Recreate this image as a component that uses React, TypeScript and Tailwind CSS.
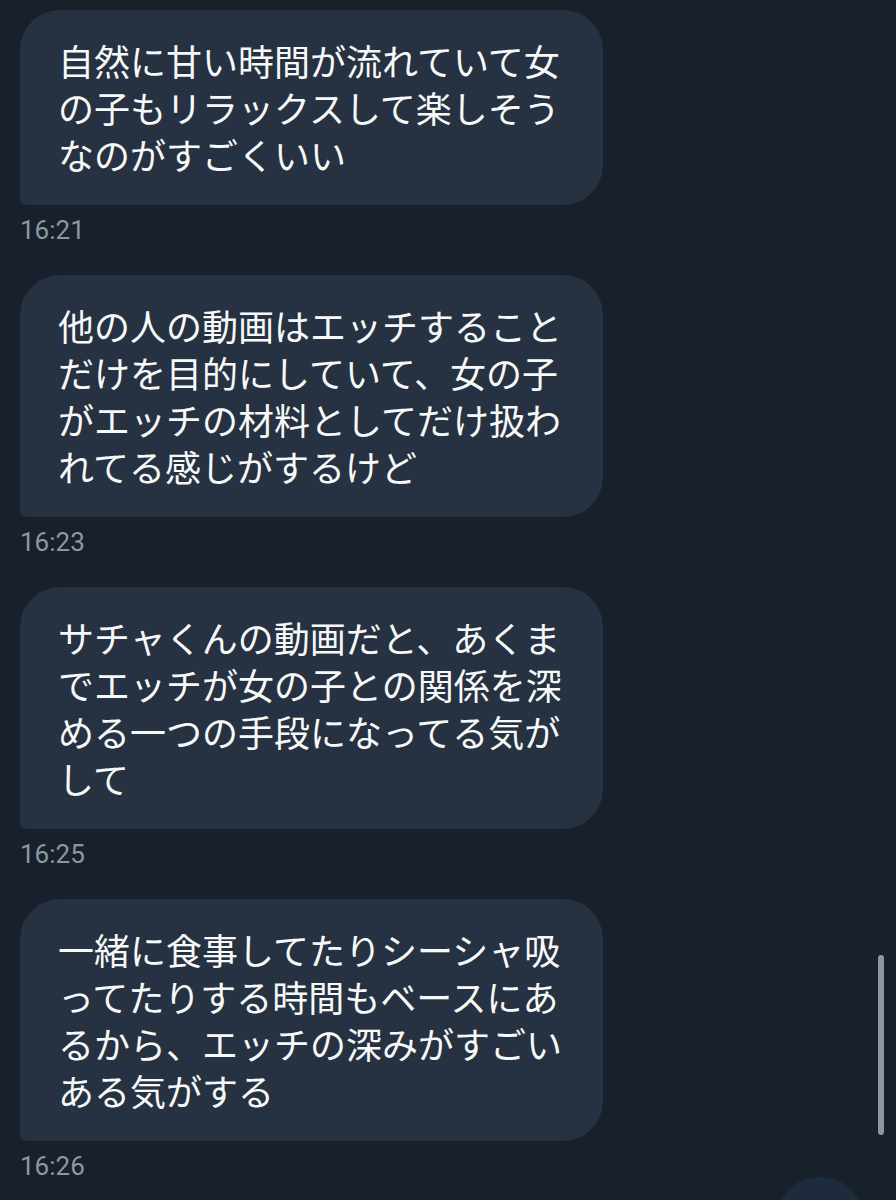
import React from "react";

const messages: { lines: string[]; time: string }[] = [
  {
    lines: ["自然に甘い時間が流れていて女", "の子もリラックスして楽しそう", "なのがすごくいい"],
    time: "16:21",
  },
  {
    lines: [
      "他の人の動画はエッチすること",
      "だけを目的にしていて、女の子",
      "がエッチの材料としてだけ扱わ",
      "れてる感じがするけど",
    ],
    time: "16:23",
  },
  {
    lines: [
      "サチャくんの動画だと、あくま",
      "でエッチが女の子との関係を深",
      "める一つの手段になってる気が",
      "して",
    ],
    time: "16:25",
  },
  {
    lines: [
      "一緒に食事してたりシーシャ吸",
      "ってたりする時間もベースにあ",
      "るから、エッチの深みがすごい",
      "ある気がする",
    ],
    time: "16:26",
  },
];

export default function App() {
  return (
    <div
      className="relative w-[896px] h-[1200px] overflow-hidden bg-[#17202b]"
      style={{ fontFamily: '"Noto Sans CJK JP", "Noto Sans", sans-serif' }}
    >
      <div className="flex flex-col px-[20px] pt-[10px]">
        {messages.map((m) => (
          <div key={m.time} className="flex flex-col items-start mb-[30px]">
            <div className="w-[583px] bg-[#263241] rounded-[40px] rounded-bl-[6px] pl-[38px] pr-[10px] pt-[27px] pb-[27px]">
              {m.lines.map((l, i) => (
                <div
                  key={i}
                  className="whitespace-nowrap text-[36px] leading-[47px] text-[#f7f9f9]"
                >
                  {l}
                </div>
              ))}
            </div>
            <div
              className="mt-[10px] text-[26px] leading-[30px] text-[#8b98a5]"
              style={{ fontFamily: 'Roboto, "Liberation Sans", sans-serif' }}
            >
              {m.time}
            </div>
          </div>
        ))}
      </div>
      <div className="absolute left-[878px] top-[955px] w-[6px] h-[180px] rounded-full bg-[#8e969f]" />
      <div className="absolute left-[776px] top-[1177px] w-[88px] h-[88px] rounded-full bg-[#1e2b3c]" />
    </div>
  );
}
